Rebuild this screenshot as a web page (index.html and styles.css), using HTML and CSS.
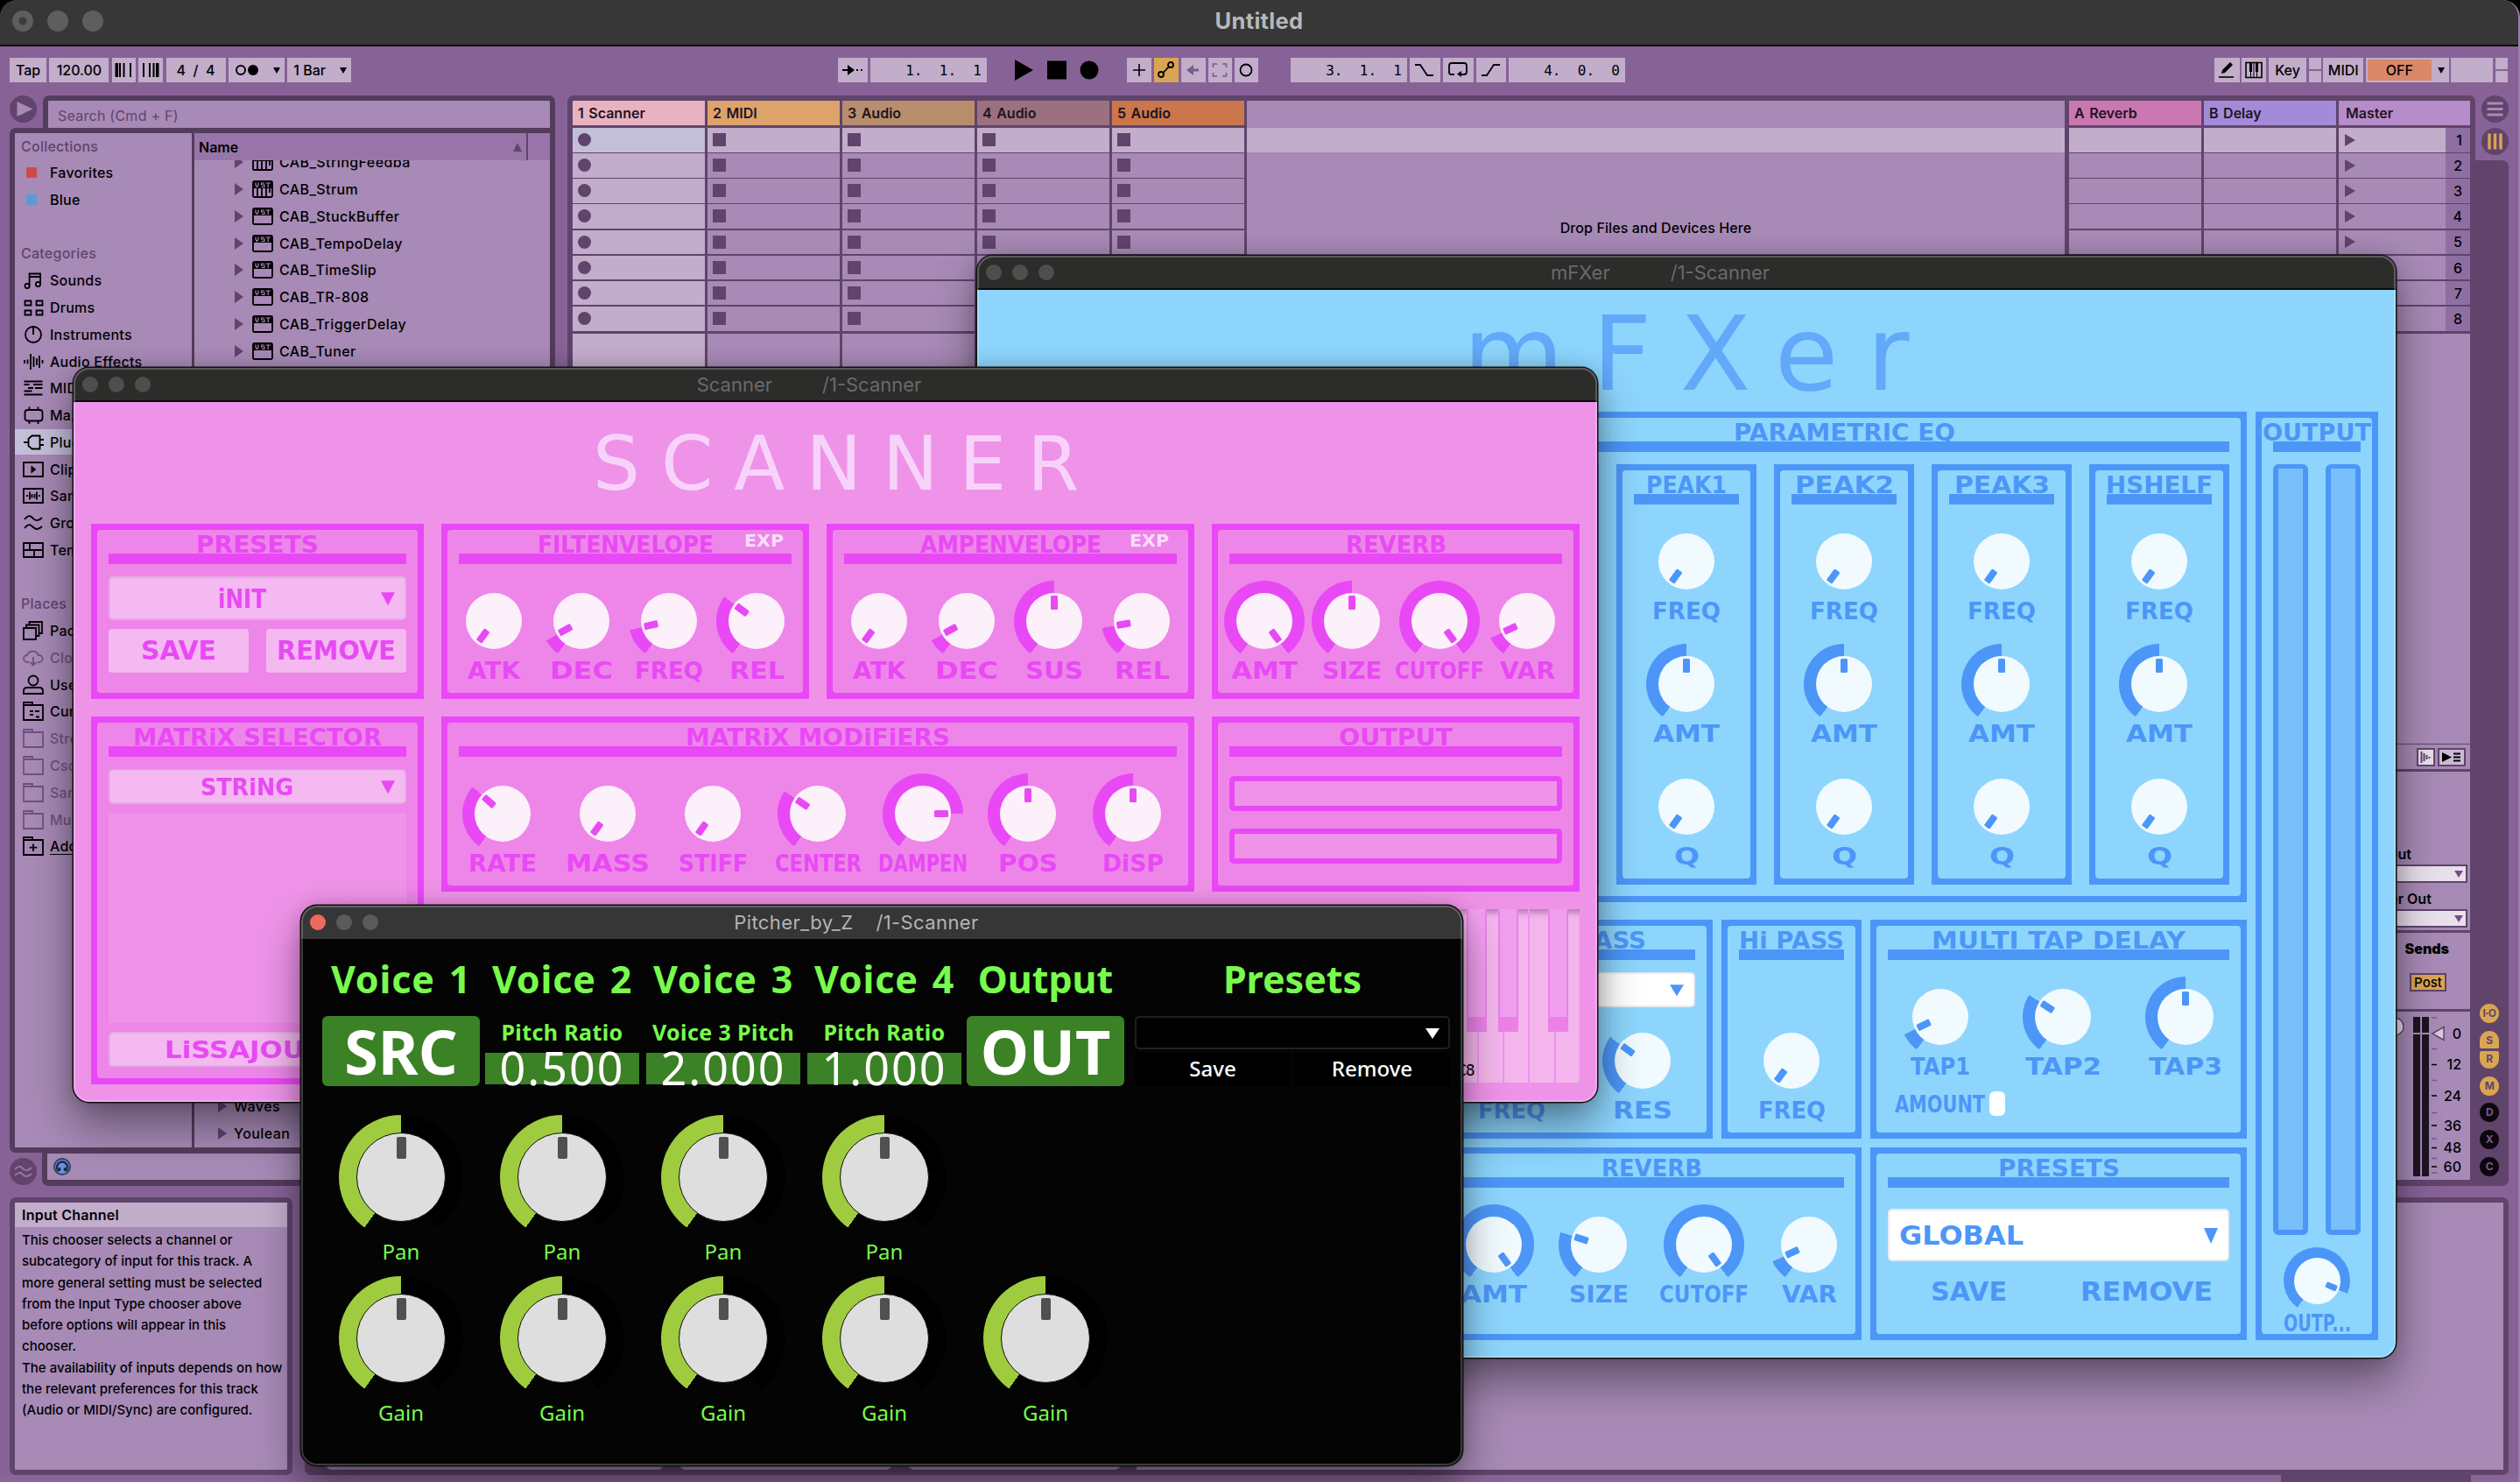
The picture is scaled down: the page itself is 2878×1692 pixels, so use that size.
FILE: index.html
```html
<!DOCTYPE html>
<html lang="en">
<head>
<meta charset="utf-8">
<title>Untitled</title>
<link rel="stylesheet" href="styles.css">
</head>
<body>
<svg class="defs" aria-hidden="true">
  <symbol id="i-sounds" viewBox="0 0 24 24"><circle cx="5" cy="18.5" r="2.6"/><circle cx="17.500" cy="16.500" r="2.600"/><path d="M7.600 18.500V4.500H20.100V16.500M7.600 8H20"/></symbol>
  <symbol id="i-drums" viewBox="0 0 24 24"><path d="M2.500 4.500h7v5h-7zM15.500 4.500h7v5h-7zM2.500 15.500h7v5h-7zM15.500 15.500h7v5h-7z"/></symbol>
  <symbol id="i-inst" viewBox="0 0 24 24"><circle cx="12" cy="12" r="9"/><path d="M12 3V12"/></symbol>
  <symbol id="i-audio" viewBox="0 0 24 24"><path d="M2 10v4M5.500 9.500v5M9 3v18M12.500 6v12M16 8v8M19 5v14M22.500 10v4"/></symbol>
  <symbol id="i-midi" viewBox="0 0 24 24"><path d="M1.500 4.500h21M1.500 8h6M12 8h10.500M6 12h6M14 12h8.500M1.500 15.500h9M1.500 19.500h21"/></symbol>
  <symbol id="i-max" viewBox="0 0 24 24"><rect x="2.500" y="6" width="20" height="12.500" rx="3"/><path d="M7.500 2.500v3.500M17.500 2.500v3.500M7.500 18.500V22M17.500 18.500V22"/></symbol>
  <symbol id="i-plug" viewBox="0 0 24 24"><path d="M1 12h5.500M19.500 4.500v15h-9l-4-3.500V8l4-3.500zM19.500 9H24M19.500 15H24"/></symbol>
  <symbol id="i-clip" viewBox="0 0 24 24"><path d="M1 4h22v16H1z"/><path class="f" d="M9.500 7.500v9l6-4.500z"/></symbol>
  <symbol id="i-samp" viewBox="0 0 24 24"><path d="M1 4h22v16H1zM5 11v2M8 7.500v9M10.500 10v4.500M13.500 10v4.500M16 7.500v9M19 11v2"/></symbol>
  <symbol id="i-groove" viewBox="0 0 24 24"><path d="M2 8c5-6 7-4 10-1s6 3 10-1M2 18c5-6 7-4 10-1s6 3 10-1"/></symbol>
  <symbol id="i-temp" viewBox="0 0 24 24"><path d="M1 4h22v16H1zM1 12h22M8 4v8M13 12v8"/></symbol>
  <symbol id="i-packs" viewBox="0 0 24 24"><path d="M1 9h14v13H1zM4 9V5.500h14.500V18H15M7.500 5V2H22v13h-3.500"/></symbol>
  <symbol id="i-cloud" viewBox="0 0 24 24"><path d="M7 17H5a4 4 0 0 1 0-8 7 7 0 0 1 13 0 4 4 0 0 1 1 8h-2M12 11v9M8.500 17l3.500 3.500 3.500-3.500"/></symbol>
  <symbol id="i-user" viewBox="0 0 24 24"><circle cx="12" cy="7" r="5.500"/><path d="M1 22v-3q0-4 4-4h14q4 0 4 4v3z"/></symbol>
  <symbol id="i-folder" viewBox="0 0 24 24"><path d="M1 22V2h10v3h12v17zM1 5h10"/></symbol>
  <symbol id="i-proj" viewBox="0 0 24 24"><path d="M1 22V2h10v3h12v17zM1 5h10M8 12h4M14 12h5M8 16h4M15 18.500h4"/></symbol>
  <symbol id="i-add" viewBox="0 0 24 24"><path d="M1 22V2h10v3h12v17zM1 5h10M12 9.500v8.500M7.800 13.700h8.500"/></symbol>
  <symbol id="i-vst" viewBox="0 0 24 24"><rect x="1" y="3" width="22" height="18" rx="1.500"/><path class="f" d="M1 3h22v8H1z"/><path class="inv" d="M4 4.500v3l1.500 2 1.500-2v-3M14 5h-3.500v2H14v2.500h-3.500M15.500 5H21M18.200 5v5"/></symbol>
  <symbol id="i-vsti" viewBox="0 0 24 24"><rect x="1" y="3" width="22" height="18" rx="1.500"/><path class="f" d="M1 3h22v8H1z"/><path d="M6 11v10M11 11v10M16 11v10M20 11v5"/><path class="inv" d="M4 4.500v3l1.500 2 1.500-2v-3M14 5h-3.500v2H14v2.500h-3.500M15.500 5H21M18.200 5v5"/></symbol>
</svg>

<div class="desktop">
<main class="live">
  <header class="bar"><span class="lights"><i class="dot"></i><i></i><i></i></span><h1>Untitled</h1></header>

  <nav class="tools">
    <div class="grp g1">
      <b style="width:42px">Tap</b><b style="width:68px">120.00</b>
      <b style="width:27px"><svg width="20" height="18"><path d="M1.500 1v16M6 1v16M10.500 1v16M18 1v16" stroke="#000" stroke-width="2"/><path d="M3 1v16" stroke="#000" stroke-width="2"/></svg></b>
      <b style="width:28px"><svg width="20" height="18"><path d="M2 1v16M9 1v16M13.500 1v16M17 1v16M18.500 1v16" stroke="#000" stroke-width="2"/></svg></b>
      <b style="width:68px" class="sp">4&nbsp; /&nbsp; 4</b>
      <b style="width:64px" class="l"><svg width="30" height="16"><circle cx="7" cy="8" r="5" fill="none" stroke="#000" stroke-width="2"/><circle cx="21" cy="8" r="6"/></svg><i class="dn"></i></b>
      <b style="width:73px" class="l">1 Bar<i class="dn"></i></b>
    </div>
    <div class="grp g2">
      <b style="width:34px"><svg width="26" height="14"><path d="M1 7h7" stroke="#000" stroke-width="2"/><path d="M7 1v12l8-6z"/><path d="M17 7h2M22 7h2" stroke="#000" stroke-width="2"/></svg></b>
      <b style="width:133px" class="mono">1.&nbsp; 1.&nbsp; 1</b>
    </div>
    <svg class="transport" width="98" height="28"><path d="M1 2v24l21-12z"/><path d="M38 3.500h22v21H38z"/><circle cx="86" cy="14" r="10.500"/></svg>
    <div class="grp g3">
      <b style="width:28px"><svg width="16" height="16"><path d="M8 1v14M1 8h14" stroke="#000" stroke-width="1.600"/></svg></b>
      <b style="width:28px" class="on"><svg width="22" height="22" fill="none" stroke="#000" stroke-width="1.800"><circle cx="5" cy="16" r="3"/><circle cx="16" cy="5" r="3"/><path d="M7.500 14l6.500-7"/></svg></b>
      <b style="width:28px"><svg width="16" height="14"><path d="M5 7h9" stroke="#7c5a8c" stroke-width="3"/><path d="M0 7l8-6v12z" fill="#7c5a8c"/></svg></b>
      <b style="width:27px"><svg width="18" height="18" fill="none" stroke="#7c5a8c" stroke-width="1.600"><path d="M1.500 6V2H6M12 2h4.500v4M16.500 12v4H12M6 16H1.500v-4"/></svg></b>
      <b style="width:27px"><svg width="18" height="18"><circle cx="9" cy="9" r="6.500" fill="none" stroke="#000" stroke-width="1.800"/></svg></b>
    </div>
    <div class="grp g4">
      <b style="width:133px" class="mono">3.&nbsp; 1.&nbsp; 1</b>
      <b style="width:35px"><svg class="s" width="24" height="16"><path d="M1 2h6l8 12h7"/></svg></b>
      <b style="width:35px"><svg class="s" width="24" height="20"><path d="M8 15H4q-2 0-2-3V5q0-3 3-3h14q3 0 3 3v7q0 3-3 3h-4"/><path class="f" d="M16 11v7l-5-3.500z"/></svg></b>
      <b style="width:34px"><svg class="s" width="24" height="16"><path d="M1 14h6l8-12h7"/></svg></b>
      <b style="width:133px" class="mono">4.&nbsp; 0.&nbsp; 0</b>
    </div>
    <div class="grp g5">
      <b style="width:29px"><svg width="20" height="20"><path d="M4 14l1-4 9-9 3 3-9 9z"/><path d="M1 18h17" stroke="#000" stroke-width="1.600"/></svg></b>
      <b style="width:28px"><svg width="20" height="20"><path d="M1 1.500h18v17H1z" fill="none" stroke="#000" stroke-width="1.600"/><path d="M5 1h3v11H5zM12 1h3v11h-3z"/><path d="M6.500 12v7M13.500 12v7M10 1v17" stroke="#000"/></svg></b>
      <b style="width:43px">Key</b><b style="width:14px" class="split"></b>
      <b style="width:46px">MIDI</b>
      <b style="width:95px" class="cpu"><em>OFF</em><i class="dn"></i></b>
      <b style="width:48px"></b><b style="width:14px" class="split"></b>
    </div>
  </nav>

  <div class="work">
    <section class="browser">
      <div class="srow"><span class="round"><svg width="31" height="31"><path d="M8.500 7v17l18-8.500z" fill="#a78ab6"/></svg></span><div class="search">Search (Cmd + F)</div></div>
      <div class="panes">
        <ul class="side">
          <li class="h">Collections</li>
          <li><i class="tag" style="background:#d1484b"></i>Favorites</li>
          <li><i class="tag" style="background:#5b9ad5"></i>Blue</li>
          <li></li>
          <li class="h">Categories</li>
          <li><svg><use href="#i-sounds"/></svg>Sounds</li>
          <li><svg><use href="#i-drums"/></svg>Drums</li>
          <li><svg><use href="#i-inst"/></svg>Instruments</li>
          <li><svg><use href="#i-audio"/></svg>Audio Effects</li>
          <li><svg><use href="#i-midi"/></svg>MIDI Effects</li>
          <li><svg><use href="#i-max"/></svg>Max for Live</li>
          <li class="sel"><svg><use href="#i-plug"/></svg>Plug-Ins</li>
          <li><svg><use href="#i-clip"/></svg>Clips</li>
          <li><svg><use href="#i-samp"/></svg>Samples</li>
          <li><svg><use href="#i-groove"/></svg>Grooves</li>
          <li><svg><use href="#i-temp"/></svg>Templates</li>
          <li></li>
          <li class="h">Places</li>
          <li><svg><use href="#i-packs"/></svg>Packs</li>
          <li class="off"><svg><use href="#i-cloud"/></svg>Cloud</li>
          <li><svg><use href="#i-user"/></svg>User Library</li>
          <li><svg><use href="#i-proj"/></svg>Current Project</li>
          <li class="off"><svg><use href="#i-folder"/></svg>Strech</li>
          <li class="off"><svg><use href="#i-folder"/></svg>Csound</li>
          <li class="off"><svg><use href="#i-folder"/></svg>Samples</li>
          <li class="off"><svg><use href="#i-folder"/></svg>Music</li>
          <li class="u"><svg><use href="#i-add"/></svg>Add Folder</li>
        </ul>
        <div class="files">
          <div class="fh"><span>Name</span><i></i></div>
          <ul class="list">
            <li><svg><use href="#i-vsti"/></svg>CAB_StringFeedba</li>
            <li><svg><use href="#i-vsti"/></svg>CAB_Strum</li>
            <li><svg><use href="#i-vst"/></svg>CAB_StuckBuffer</li>
            <li><svg><use href="#i-vst"/></svg>CAB_TempoDelay</li>
            <li><svg><use href="#i-vst"/></svg>CAB_TimeSlip</li>
            <li><svg><use href="#i-vst"/></svg>CAB_TR-808</li>
            <li><svg><use href="#i-vst"/></svg>CAB_TriggerDelay</li>
            <li><svg><use href="#i-vst"/></svg>CAB_Tuner</li>
            <li class="dir first">Waves</li>
            <li class="dir">Youlean</li>
          </ul>
        </div>
      </div>
      <div class="foot"><span class="round"><svg width="31" height="31" fill="none" stroke="#9775a9" stroke-width="2"><path d="M6 13c4-4 6-4 9-1s6 3 10-1M6 20c4-4 6-4 9-1s6 3 10-1"/></svg></span>
        <div class="prev"><svg width="22" height="22"><circle cx="11" cy="11" r="10" fill="#33405f"/><circle cx="11" cy="11" r="8" fill="#6b8fe0"/><path d="M7 16a6 6 0 1 1 8 0M8 12v4M14 12v4" fill="none" stroke="#1f2b4f" stroke-width="2.400"/></svg></div></div>
    </section>

    <section class="session">
      <div class="col first"><h3 style="background:#e8b2c0">1 Scanner</h3><p></p><p></p><p></p><p></p><p></p><p></p><p></p><p></p><div></div></div>
      <div class="col"><h3 style="background:#dda36a">2 MIDI</h3><p></p><p></p><p></p><p></p><p></p><p></p><p></p><p></p><div></div></div>
      <div class="col"><h3 style="background:#b98e6c">3 Audio</h3><p></p><p></p><p></p><p></p><p></p><p></p><p></p><p></p><div></div></div>
      <div class="col"><h3 style="background:#9c717f">4 Audio</h3><p></p><p></p><p></p><p></p><p></p><p></p><p></p><p></p><div></div></div>
      <div class="col"><h3 style="background:#cb774b">5 Audio</h3><p></p><p></p><p></p><p></p><p></p><p></p><p></p><p></p><div></div></div>
      <div class="drop"><span>Drop Files and Devices Here</span></div>
      <div class="col ret"><h3 style="background:#cb77b2">A Reverb</h3><p></p><p></p><p></p><p></p><p></p><p></p><p></p><p></p><div></div></div>
      <div class="col ret"><h3 style="background:#a38bd9">B Delay</h3><p></p><p></p><p></p><p></p><p></p><p></p><p></p><p></p><div></div></div>
      <div class="col master"><h3 style="background:#b78cca">Master</h3><p>1</p><p>2</p><p>3</p><p>4</p><p>5</p><p>6</p><p>7</p><p>8</p>
        <div class="rest"></div>
        <div class="ctl"><svg width="21" height="21"><path d="M1 1h19v19H1z" fill="#e8e0ec" stroke="#60446c" stroke-width="2"/><path d="M5.500 4v13M8.500 6v9M11.500 8v5M14.500 10v2" stroke="#60446c" stroke-width="2"/></svg><svg width="32" height="21"><path d="M1 1h30v19H1z" fill="#cbbad3" stroke="#60446c" stroke-width="2"/><path d="M5 5v11l11-5.500z"/><path d="M18 6.500h8M18 10.500h8M18 14.500h8" stroke="#000" stroke-width="1.800"/></svg></div>
        <div class="io"><label class="cue">Cue Out</label><span></span><label>Master Out</label><span></span></div>
        <div class="sends"><b>Sends</b><em>Post</em></div>
        <svg class="meter" width="150" height="192">
          <circle cx="64" cy="17" r="10" fill="#e8e0ec" stroke="#60446c" stroke-width="1.500"/>
          <path d="M85 6h8v182h-8zM95 6h8v182h-8z" fill="#1d1422"/><path d="M85 25h19" stroke="#a78ab6" stroke-width="2"/>
          <path d="M107 25l13-7.500v15z" fill="#d9cbe0" stroke="#60446c" stroke-width="1.500"/>
          <path d="M106 7h6M106 42.500h6M106 78.500h6M106 115.500h6M106 145h6M106 167.500h6M106 184h6" stroke="#7c5a8c" stroke-width="1.500"/>
          <path d="M106 60.500h6M106 96h6M106 130h6M106 155.500h6M106 177h6" stroke="#000" stroke-width="1.700"/>
          <g text-anchor="end"><text x="140" y="31">0</text><text x="140" y="66">12</text><text x="140" y="102">24</text><text x="140" y="136">36</text><text x="140" y="161">48</text><text x="140" y="183">60</text></g>
        </svg>
      </div>
    </section>

    <aside class="rail">
      <span class="round"><svg width="31" height="31"><path d="M6.500 9h18M6.500 15.500h18M6.500 22h18" stroke="#a78ab6" stroke-width="3"/></svg></span>
      <span class="round"><svg width="31" height="31"><path d="M9 6.500v18M15.500 6.500v18M22 6.500v18" stroke="#daa552" stroke-width="3.400"/></svg></span>
      <div class="shaft"><i>I·O</i><i class="top">S</i><i class="bot">R</i><i class="m">M</i><i class="k">D</i><i class="k">X</i><i class="k">C</i></div>
    </aside>
  </div>

  <div class="lower">
    <section class="info"><h2>Input Channel</h2><p>This chooser selects a channel or<br>subcategory of input for this track. A<br>more general setting must be selected<br>from the Input Type chooser above<br>before options will appear in this<br>chooser.<br>The availability of inputs depends on how<br>the relevant preferences for this track<br>(Audio or MIDI/Sync) are configured.</p></section>
    <section class="detail"><i style="width:386px;margin-left:18px"></i><i style="width:243px"></i><i style="width:243px"></i><i class="wide"></i></section>
  </div>
  <div class="status"></div>
</main>

<section class="win mfx">
  <header class="bar"><span class="lights"><i></i><i></i><i></i></span><span class="name"><span>mFXer</span><span>/1-Scanner</span></span></header>
  <h2 class="logo">mFXer</h2>
  <div class="fx">
    <div class="panel eq"><div class="in">
      <svg class="t" width="253" height="20"><text y="20" textLength="253" lengthAdjust="spacingAndGlyphs">PARAMETRIC EQ</text></svg><hr>
      <div class="bands">
        <div class="panel"><div class="in"><svg class="t" width="122" height="20"><text y="20" textLength="122" lengthAdjust="spacingAndGlyphs">LSHELF</text></svg><hr></div></div>
        <div class="panel"><div class="in"><svg class="t" width="92" height="20"><text y="20" textLength="92" lengthAdjust="spacingAndGlyphs">PEAK1</text></svg><hr>
          <div class="stack"><i class="knob" style="--v:0"></i><svg class="t" width="78" height="20"><text y="20" textLength="78" lengthAdjust="spacingAndGlyphs">FREQ</text></svg><i class="knob" style="--v:144"></i><svg class="t" width="76" height="20"><text y="20" textLength="76" lengthAdjust="spacingAndGlyphs">AMT</text></svg><i class="knob" style="--v:0"></i><svg class="t" width="29" height="20"><text y="20" textLength="29" lengthAdjust="spacingAndGlyphs">Q</text></svg></div></div></div>
        <div class="panel"><div class="in"><svg class="t" width="113" height="20"><text y="20" textLength="113" lengthAdjust="spacingAndGlyphs">PEAK2</text></svg><hr>
          <div class="stack"><i class="knob" style="--v:0"></i><svg class="t" width="78" height="20"><text y="20" textLength="78" lengthAdjust="spacingAndGlyphs">FREQ</text></svg><i class="knob" style="--v:144"></i><svg class="t" width="76" height="20"><text y="20" textLength="76" lengthAdjust="spacingAndGlyphs">AMT</text></svg><i class="knob" style="--v:0"></i><svg class="t" width="29" height="20"><text y="20" textLength="29" lengthAdjust="spacingAndGlyphs">Q</text></svg></div></div></div>
        <div class="panel"><div class="in"><svg class="t" width="109" height="20"><text y="20" textLength="109" lengthAdjust="spacingAndGlyphs">PEAK3</text></svg><hr>
          <div class="stack"><i class="knob" style="--v:0"></i><svg class="t" width="78" height="20"><text y="20" textLength="78" lengthAdjust="spacingAndGlyphs">FREQ</text></svg><i class="knob" style="--v:144"></i><svg class="t" width="76" height="20"><text y="20" textLength="76" lengthAdjust="spacingAndGlyphs">AMT</text></svg><i class="knob" style="--v:0"></i><svg class="t" width="29" height="20"><text y="20" textLength="29" lengthAdjust="spacingAndGlyphs">Q</text></svg></div></div></div>
        <div class="panel"><div class="in"><svg class="t" width="122" height="20"><text y="20" textLength="122" lengthAdjust="spacingAndGlyphs">HSHELF</text></svg><hr>
          <div class="stack"><i class="knob" style="--v:0"></i><svg class="t" width="78" height="20"><text y="20" textLength="78" lengthAdjust="spacingAndGlyphs">FREQ</text></svg><i class="knob" style="--v:144"></i><svg class="t" width="76" height="20"><text y="20" textLength="76" lengthAdjust="spacingAndGlyphs">AMT</text></svg><i class="knob" style="--v:0"></i><svg class="t" width="29" height="20"><text y="20" textLength="29" lengthAdjust="spacingAndGlyphs">Q</text></svg></div></div></div>
      </div></div></div>

    <div class="panel out"><div class="in">
      <svg class="t" width="124" height="20"><text y="20" textLength="124" lengthAdjust="spacingAndGlyphs">OUTPUT</text></svg><hr>
      <div class="vu"><i></i><i></i></div>
      <i class="knob sm" style="--v:257"></i>
      <svg class="t" width="77" height="20"><text y="20" textLength="77" lengthAdjust="spacingAndGlyphs">OUTP...</text></svg>
    </div></div>

    <div class="panel low"><div class="in">
      <svg class="t" width="158" height="20"><text y="20" textLength="158" lengthAdjust="spacingAndGlyphs">LOW PASS</text></svg><hr>
      <div class="select"><i class="tri"></i></div>
      <div class="knobs two">
        <div><i class="knob" style="--v:90"></i><svg class="t" width="77" height="20"><text y="20" textLength="77" lengthAdjust="spacingAndGlyphs">FREQ</text></svg></div>
        <div><i class="knob" style="--v:90"></i><svg class="t" width="68" height="20"><text y="20" textLength="68" lengthAdjust="spacingAndGlyphs">RES</text></svg></div>
      </div></div></div>

    <div class="panel hi"><div class="in">
      <svg class="t" width="120" height="20"><text y="20" textLength="120" lengthAdjust="spacingAndGlyphs">Hi PASS</text></svg><hr>
      <div class="knobs deep"><div><i class="knob" style="--v:0"></i><svg class="t" width="77" height="20"><text y="20" textLength="77" lengthAdjust="spacingAndGlyphs">FREQ</text></svg></div></div></div></div>

    <div class="panel tap"><div class="in">
      <svg class="t" width="290" height="20"><text y="20" textLength="290" lengthAdjust="spacingAndGlyphs">MULTI TAP DELAY</text></svg><hr>
      <div class="knobs">
        <div><i class="knob" style="--v:28"></i><svg class="t" width="68" height="20"><text y="20" textLength="68" lengthAdjust="spacingAndGlyphs">TAP1</text></svg></div>
        <div><i class="knob" style="--v:87"></i><svg class="t" width="87" height="20"><text y="20" textLength="87" lengthAdjust="spacingAndGlyphs">TAP2</text></svg></div>
        <div><i class="knob" style="--v:144"></i><svg class="t" width="84" height="20"><text y="20" textLength="84" lengthAdjust="spacingAndGlyphs">TAP3</text></svg></div>
      </div>
      <div class="amount"><svg class="t" width="103" height="20"><text y="20" textLength="103" lengthAdjust="spacingAndGlyphs">AMOUNT</text></svg><i></i></div>
    </div></div>

    <div class="panel rev"><div class="in">
      <svg class="t" width="115" height="20"><text y="20" textLength="115" lengthAdjust="spacingAndGlyphs">REVERB</text></svg><hr>
      <div class="knobs">
        <div><i class="knob" style="--v:288"></i><svg class="t" width="76" height="20"><text y="20" textLength="76" lengthAdjust="spacingAndGlyphs">AMT</text></svg></div>
        <div><i class="knob" style="--v:72"></i><svg class="t" width="68" height="20"><text y="20" textLength="68" lengthAdjust="spacingAndGlyphs">SIZE</text></svg></div>
        <div><i class="knob" style="--v:288"></i><svg class="t" width="102" height="20"><text y="20" textLength="102" lengthAdjust="spacingAndGlyphs">CUTOFF</text></svg></div>
        <div><i class="knob" style="--v:29"></i><svg class="t" width="63" height="20"><text y="20" textLength="63" lengthAdjust="spacingAndGlyphs">VAR</text></svg></div>
      </div></div></div>

    <div class="panel pre"><div class="in">
      <svg class="t" width="139" height="20"><text y="20" textLength="139" lengthAdjust="spacingAndGlyphs">PRESETS</text></svg><hr>
      <div class="select"><svg class="t b" width="142" height="22"><text y="22" textLength="142" lengthAdjust="spacingAndGlyphs">GLOBAL</text></svg><i class="tri"></i></div>
      <div class="acts"><svg class="t b" width="87" height="22"><text y="22" textLength="87" lengthAdjust="spacingAndGlyphs">SAVE</text></svg><svg class="t b" width="151" height="22"><text y="22" textLength="151" lengthAdjust="spacingAndGlyphs">REMOVE</text></svg></div>
    </div></div>
  </div>
</section>

<section class="win scan">
  <header class="bar"><span class="lights"><i></i><i></i><i></i></span><span class="name"><span>Scanner</span><span>/1-Scanner</span></span></header>
  <h2 class="logo">SCANNER</h2>
  <div class="grid">
    <div class="panel"><div class="in">
      <svg class="t" width="140" height="20"><text y="20" textLength="140" lengthAdjust="spacingAndGlyphs">PRESETS</text></svg><hr>
      <div class="select tall"><svg class="t b" width="55" height="22"><text y="22" textLength="55" lengthAdjust="spacingAndGlyphs">iNIT</text></svg><i class="tri"></i></div>
      <div class="btns"><span><svg class="t b" width="86" height="22"><text y="22" textLength="86" lengthAdjust="spacingAndGlyphs">SAVE</text></svg></span><span><svg class="t b" width="136" height="22"><text y="22" textLength="136" lengthAdjust="spacingAndGlyphs">REMOVE</text></svg></span></div>
    </div></div>
    <div class="panel"><div class="in">
      <svg class="t exp" width="45" height="14"><text y="14" textLength="45" lengthAdjust="spacingAndGlyphs">EXP</text></svg>
      <svg class="t" width="201" height="20"><text y="20" textLength="201" lengthAdjust="spacingAndGlyphs">FILTENVELOPE</text></svg><hr>
      <div class="knobs">
        <div><i class="knob" style="--v:0"></i><svg class="t" width="60" height="20"><text y="20" textLength="60" lengthAdjust="spacingAndGlyphs">ATK</text></svg></div>
        <div><i class="knob" style="--v:25"></i><svg class="t" width="72" height="20"><text y="20" textLength="72" lengthAdjust="spacingAndGlyphs">DEC</text></svg></div>
        <div><i class="knob" style="--v:41"></i><svg class="t" width="78" height="20"><text y="20" textLength="78" lengthAdjust="spacingAndGlyphs">FREQ</text></svg></div>
        <div><i class="knob" style="--v:91"></i><svg class="t" width="63" height="20"><text y="20" textLength="63" lengthAdjust="spacingAndGlyphs">REL</text></svg></div>
      </div></div></div>
    <div class="panel"><div class="in">
      <svg class="t exp" width="45" height="14"><text y="14" textLength="45" lengthAdjust="spacingAndGlyphs">EXP</text></svg>
      <svg class="t" width="207" height="20"><text y="20" textLength="207" lengthAdjust="spacingAndGlyphs">AMPENVELOPE</text></svg><hr>
      <div class="knobs">
        <div><i class="knob" style="--v:0"></i><svg class="t" width="60" height="20"><text y="20" textLength="60" lengthAdjust="spacingAndGlyphs">ATK</text></svg></div>
        <div><i class="knob" style="--v:25"></i><svg class="t" width="72" height="20"><text y="20" textLength="72" lengthAdjust="spacingAndGlyphs">DEC</text></svg></div>
        <div><i class="knob" style="--v:144"></i><svg class="t" width="66" height="20"><text y="20" textLength="66" lengthAdjust="spacingAndGlyphs">SUS</text></svg></div>
        <div><i class="knob" style="--v:44"></i><svg class="t" width="63" height="20"><text y="20" textLength="63" lengthAdjust="spacingAndGlyphs">REL</text></svg></div>
      </div></div></div>
    <div class="panel"><div class="in">
      <svg class="t" width="115" height="20"><text y="20" textLength="115" lengthAdjust="spacingAndGlyphs">REVERB</text></svg><hr>
      <div class="knobs">
        <div><i class="knob" style="--v:288"></i><svg class="t" width="76" height="20"><text y="20" textLength="76" lengthAdjust="spacingAndGlyphs">AMT</text></svg></div>
        <div><i class="knob" style="--v:144"></i><svg class="t" width="68" height="20"><text y="20" textLength="68" lengthAdjust="spacingAndGlyphs">SIZE</text></svg></div>
        <div><i class="knob" style="--v:288"></i><svg class="t" width="102" height="20"><text y="20" textLength="102" lengthAdjust="spacingAndGlyphs">CUTOFF</text></svg></div>
        <div><i class="knob" style="--v:29"></i><svg class="t" width="63" height="20"><text y="20" textLength="63" lengthAdjust="spacingAndGlyphs">VAR</text></svg></div>
      </div></div></div>
    <div class="panel sel2"><div class="in">
      <svg class="t" width="284" height="20"><text y="20" textLength="284" lengthAdjust="spacingAndGlyphs">MATRiX SELECTOR</text></svg><hr>
      <div class="select"><svg class="t" width="106" height="20"><text y="20" textLength="106" lengthAdjust="spacingAndGlyphs">STRiNG</text></svg><i class="tri"></i></div>
      <div class="view"></div>
      <div class="select last"><svg class="t" width="182" height="20"><text y="20" textLength="182" lengthAdjust="spacingAndGlyphs">LiSSAJOUS</text></svg></div>
    </div></div>
    <div class="panel mods"><div class="in">
      <svg class="t" width="302" height="20"><text y="20" textLength="302" lengthAdjust="spacingAndGlyphs">MATRiX MODiFiERS</text></svg><hr>
      <div class="knobs">
        <div><i class="knob" style="--v:96"></i><svg class="t" width="78" height="20"><text y="20" textLength="78" lengthAdjust="spacingAndGlyphs">RATE</text></svg></div>
        <div><i class="knob" style="--v:0"></i><svg class="t" width="96" height="20"><text y="20" textLength="96" lengthAdjust="spacingAndGlyphs">MASS</text></svg></div>
        <div><i class="knob" style="--v:0"></i><svg class="t" width="79" height="20"><text y="20" textLength="79" lengthAdjust="spacingAndGlyphs">STIFF</text></svg></div>
        <div><i class="knob" style="--v:88"></i><svg class="t" width="99" height="20"><text y="20" textLength="99" lengthAdjust="spacingAndGlyphs">CENTER</text></svg></div>
        <div><i class="knob" style="--v:234"></i><svg class="t" width="102" height="20"><text y="20" textLength="102" lengthAdjust="spacingAndGlyphs">DAMPEN</text></svg></div>
        <div><i class="knob" style="--v:144"></i><svg class="t" width="68" height="20"><text y="20" textLength="68" lengthAdjust="spacingAndGlyphs">POS</text></svg></div>
        <div><i class="knob" style="--v:144"></i><svg class="t" width="70" height="20"><text y="20" textLength="70" lengthAdjust="spacingAndGlyphs">DiSP</text></svg></div>
      </div></div></div>
    <div class="panel"><div class="in">
      <svg class="t" width="130" height="20"><text y="20" textLength="130" lengthAdjust="spacingAndGlyphs">OUTPUT</text></svg><hr>
      <div class="hu"><i></i><i></i></div>
    </div></div>
    <div class="keys"><span>C8</span><i></i><i></i><i></i><i></i><b class="k1"></b><b class="k2"></b><b class="k3"></b></div>
  </div>
</section>

<section class="win pitch">
  <header class="bar"><span class="lights"><i class="red"></i><i></i><i></i></span><span class="name"><span>Pitcher_by_Z</span><span>/1-Scanner</span></span></header>
  <div class="pbody">
    <div class="voice"><h3>Voice 1</h3><div class="big">SRC</div><i class="dial"></i><label>Pan</label><i class="dial"></i><label>Gain</label></div>
    <div class="voice"><h3>Voice 2</h3><div class="ratio"><b>Pitch Ratio</b><span><em>0.500</em></span></div><i class="dial"></i><label>Pan</label><i class="dial"></i><label>Gain</label></div>
    <div class="voice"><h3>Voice 3</h3><div class="ratio"><b>Voice 3 Pitch</b><span><em>2.000</em></span></div><i class="dial"></i><label>Pan</label><i class="dial"></i><label>Gain</label></div>
    <div class="voice"><h3>Voice 4</h3><div class="ratio"><b>Pitch Ratio</b><span><em>1.000</em></span></div><i class="dial"></i><label>Pan</label><i class="dial"></i><label>Gain</label></div>
    <div class="voice outv"><h3>Output</h3><div class="big">OUT</div><i class="dial"></i><label>Gain</label></div>
    <div class="presets"><h3>Presets</h3><div class="combo"><i></i></div><div class="pair"><span>Save</span><span>Remove</span></div></div>
  </div>
</section>
</div>
</body>
</html>
```
FILE: styles.css
```css
* { box-sizing: border-box; margin: 0; padding: 0; }
body { width: 2878px; height: 1692px; overflow: hidden; background: #000; font-family: Inter, "Liberation Sans", sans-serif; font-size: 16px; color: #000; }
ul { list-style: none; }
i, em { font-style: normal; display: block; }
svg { display: block; flex: none; }
.defs { width: 0; height: 0; position: absolute; }
.desktop { position: relative; width: 2878px; height: 1692px; overflow: hidden; }

/* window chrome */
.bar { position: relative; display: flex; align-items: center; justify-content: center; }
.lights { position: absolute; left: 10px; top: 10px; display: flex; gap: 12px; }
.lights i { width: 18px; height: 18px; border-radius: 50%; background: #4e4e4d; }
.live { width: 2878px; height: 1692px; background: #876297; border-radius: 20px 20px 0 0; overflow: hidden; display: flex; flex-direction: column; border-right: 2px solid #9b7fa9; }
.live > .bar { height: 53px; flex: none; background: #373737; border-bottom: 2px solid #0a060b; padding: 0 0 5px 0; }
.live > .bar .lights { left: 14px; top: 12px; gap: 16px; }
.live > .bar .lights i { width: 24px; height: 24px; background: #5e5e5e; }
.live > .bar .dot { background: radial-gradient(circle, #3c3c3c 4px, #5e5e5e 5px) !important; }
.live h1 { font-size: 25.5px; font-weight: 700; color: #b8b8b8; letter-spacing: .3px; }

/* toolbar */
.tools { height: 56px; flex: none; display: flex; align-items: flex-start; padding: 13px 12px 0 11px; }
.grp { display: flex; gap: 3px; }
.g1 { gap: 3.4px; }
.grp b { height: 28px; background: #c2adcb; font-weight: 500; font-size: 16px; display: flex; align-items: center; justify-content: center; white-space: nowrap; overflow: hidden; }
.grp b.l { justify-content: space-between; padding: 0 5px 0 7px; }
.grp b.mono { font-family: "DejaVu Sans Mono", monospace; font-weight: 400; font-size: 16px; justify-content: flex-end; padding-right: 6px; }
.grp b.on { background: #daa552; }
.grp b.split { background: linear-gradient(#c2adcb 13px, #876297 13px 15px, #c2adcb 15px); }
.grp svg.s { fill: none; stroke: #000; stroke-width: 1.8; }
.grp svg.s .f { fill: #000; stroke: none; }
.grp .cpu { justify-content: space-between; padding: 0 5px 0 2px; }
.cpu em { width: 73px; height: 24px; line-height: 24px; text-align: center; background: #d98869; }
.dn { border: 4px solid transparent; border-top: 7px solid #000; border-bottom: 0; }
.g2 { margin-left: 555.6px; }
.transport { margin-left: 31px; }
.g3 { margin-left: 31px; }
.g4 { margin-left: 37px; }
.g5 { margin-left: auto; gap: 2.6px; }

/* browser */
.work { display: flex; height: 1245px; flex: none; }
.round { width: 31px; height: 31px; border-radius: 50%; background: #60446c; flex: none; }
.browser { width: 623px; margin-left: 11px; display: flex; flex-direction: column; }
.srow { display: flex; height: 40px; gap: 7px; flex: none; }
.search { flex: 1; border: 6px solid #533c5c; border-bottom: 0; border-radius: 7px 7px 0 0; background: #a78ab6; color: #60446c; line-height: 35px; padding-left: 11px; letter-spacing: .25px; }
.panes { position: relative; margin-top: -3px; height: 1170px; flex: none; background: #533c5c; border-radius: 7px 0 0 7px; padding: 6px; display: flex; gap: 3px; }
.side { width: 202px; background: #a78ab6; overflow: hidden; white-space: nowrap; letter-spacing: .25px; }
.side li { height: 30.78px; display: flex; align-items: center; gap: 7px; padding-left: 9px; font-weight: 500; font-size: 16px; }
.side li:first-child { height: 29.8px; }
.side .h { color: #60446c; padding-left: 7px; }
.side svg, .list svg { width: 24px; height: 24px; fill: none; stroke: #000; stroke-width: 1.8; }
.f { fill: #000; stroke: none; }
.inv { stroke: #a78ab6; stroke-width: 1.2; }
.side .tag { width: 12px; height: 12px; margin: 0 8px 0 4px; border-radius: 1px; }
.side .sel { background: linear-gradient(#c4bfd9, #c4bfd9) 0 1px / 100% 29px no-repeat; }
.side .off { color: #6f517c; }
.side .off svg { stroke: #6f517c; }
.side .u { text-decoration: underline; text-underline-offset: 3px; }
.files { flex: 1; background: #a78ab6; display: flex; flex-direction: column; min-height: 0; }
.fh { height: 31px; flex: none; background: #9775a9; display: flex; align-items: center; justify-content: space-between; padding: 0 32px 0 5px; font-weight: 600; font-size: 16px; background-image: linear-gradient(90deg, transparent 379px, #60446c 379px 381px, transparent 381px); }
.fh i { border: 5.5px solid transparent; border-bottom: 10px solid #60446c; border-top: 0; }
.list { flex: 1; min-height: 0; overflow: hidden; display: flex; flex-direction: column; font-weight: 500; letter-spacing: .42px; padding-bottom: 1px; }
.list li { height: 30.78px; flex: none; display: flex; align-items: center; gap: 7px; padding-left: 46px; }
.list li:first-child { margin-top: -13px; }
.list li::before { content: ""; border: 7px solid transparent; border-left: 10px solid #60446c; border-right: 0; margin-right: 3px; }
.list .dir { padding-left: 27px; gap: 5px; }
.list .first { margin-top: auto; }
.foot { display: flex; height: 41px; margin-top: -3px; gap: 6px; align-items: flex-end; }
.foot .round { position: relative; top: -1px; }
.prev { flex: 1; height: 41px; border: solid #533c5c; border-width: 4px 6px 7px 6px; border-radius: 0 0 7px 7px; background: #a78ab6; padding: 4px 6px; }

/* session view */
.session { width: 2179px; margin-left: 14px; background: #60446c; border-radius: 7px 7px 0 0; padding: 6px 6px 7px; display: flex; gap: 3px; }
.col { width: 151px; flex: none; display: flex; flex-direction: column; gap: 1.5px; }
.col h3 { height: 28px; line-height: 28px; margin-bottom: 1.5px; padding-left: 6px; font-size: 16px; font-weight: 600; word-spacing: 1.5px; color: #20141f; flex: none; }
.col p { height: 27.65px; flex: none; background: #a78ab6; padding: 6px; }
.col p::before { content: ""; display: block; width: 15px; height: 15px; background: #60446c; }
.col p:nth-of-type(1) { background: #c2adcb; }
.col > div { background: #a78ab6; }
.col > div:last-child { flex: 1; margin-top: 1.5px; }
.first p { background: #c2adcb; }
.first p:nth-of-type(1) { background: #c4bfd9; }
.first p::before { border-radius: 50%; }
.first > div { background: #c2adcb !important; }
.drop { flex: 1; margin-right: 2px; background: linear-gradient(#a78ab6 31px, #c2adcb 31px 58.5px, #a78ab6 58.5px); text-align: center; padding-top: 135px; letter-spacing: .1px; font-weight: 500; }
.ret p::before { display: none; }
.master { width: 150px; }
.master h3 { padding-left: 8px; }
.master p { display: flex; justify-content: space-between; padding: 0 9px 0 7px; align-items: center; font-weight: 500; background: linear-gradient(90deg, transparent 122px, #8f6ea1 122px) #a78ab6; }
.master p:nth-of-type(1) { background: linear-gradient(90deg, transparent 122px, #8f6ea1 122px) #c2adcb; }
.master p::before { width: 0; height: 0; background: none; border: 7px solid transparent; border-left: 12px solid #60446c; border-right: 0; }
.master .rest { height: 468px; flex: none; margin-top: 1.5px; }
.ctl { height: 28px; flex: none; display: flex; gap: 3px; justify-content: flex-end; align-items: center; padding-right: 5px; }
.io { height: 181px; margin-top: 1.5px; flex: none; padding: 84px 3px 0 20px; display: flex; flex-direction: column; font-weight: 600; }
.io label { height: 22px; flex: none; line-height: 21px; padding-right: 55px; white-space: nowrap; text-align: right; }
.io .cue { padding-right: 79px; }
.io .cue + span { margin-bottom: 8px; }
.io span { height: 21px; flex: none; background: #e8e0ec; border: 2px solid #60446c; position: relative; }
.io span::after { content: ""; position: absolute; right: 3px; top: 5px; border: 5px solid transparent; border-top: 8px solid #7c4a8c; border-bottom: 0; }
.sends { height: 87px; margin-top: 1.5px; flex: none; display: flex; flex-direction: column; align-items: flex-end; padding: 8px 24px 0 0; font-weight: 600; }
.sends em { margin: 18px 3px 0 0; width: 42px; height: 21px; line-height: 17px; border: 2px solid #60446c; background: #daa552; text-align: center; font-weight: 500; font-size: 15px; }
.meter { margin-top: 1.5px; background: #a78ab6; font-size: 16px; font-weight: 500; }

.rail { width: 38px; display: flex; flex-direction: column; align-items: flex-end; gap: 6px; }
.shaft { width: 44px; flex: 1; background: #60446c; border-radius: 0 7px 7px 0; display: flex; flex-direction: column; align-items: center; justify-content: flex-end; padding-bottom: 11px; gap: 8.8px; }
.shaft i { width: 22px; height: 22px; border-radius: 50%; background: #daa552; color: #60446c; font: 700 12px/22px Inter, sans-serif; text-align: center; letter-spacing: -.5px; }
.shaft .top { height: 20px; line-height: 21px; border-radius: 11px 11px 2px 2px; margin-bottom: -6px; }
.shaft .bot { height: 20px; line-height: 18px; border-radius: 2px 2px 11px 11px; }
.shaft .k { background: #0c070e; color: #7c5a8c; }

/* info and device views */
.lower { display: flex; gap: 14px; margin: 13px 0 0 11px; height: 317px; flex: none; }
.info { width: 323px; background: #a78ab6; border: 6px solid #60446c; border-radius: 7px; }
.info h2 { height: 28px; line-height: 28px; padding-left: 8px; font-size: 16px; font-weight: 600; background: #c2adcb; letter-spacing: .25px; }
.info p { padding: 3px 0 0 8px; line-height: 24.3px; font-size: 15px; font-weight: 500; white-space: nowrap; }
.detail { width: 2517px; background: #60446c; border-radius: 7px; padding: 6px; display: flex; gap: 18px; }
.detail i { background: #a78ab6; border-radius: 7px; }
.detail .wide { flex: 1; border-radius: 0; }
.status { height: 8px; background: linear-gradient(90deg, #8a649a 2605px, #60446c 2605px 2822px, #8a649a 2822px); }

/* plug-in windows */
.win { position: absolute; border-radius: 18px; overflow: hidden; box-shadow: 0 0 0 1.5px #111, 0 26px 50px rgba(0,0,0,.42), 0 0 22px rgba(0,0,0,.18); display: flex; flex-direction: column; }
.win::after { content: ""; position: absolute; inset: 0; border-radius: 18px; box-shadow: inset 0 0 0 2px rgba(255,255,255,.22); pointer-events: none; }
.win > .bar { height: 39px; flex: none; background: #2c2c2b; border-bottom: 2px solid #0a0a0a; font-size: 22px; color: #6a6a6a; }
.name { display: flex; align-items: center; position: relative; }
.win hr { border: 0; height: 12px; background: var(--a); margin: 1px 13px 0; flex: none; align-self: stretch; }
.panel { background: var(--a); padding: 7px; display: flex; min-width: 0; }
.in { position: relative; flex: 1; min-width: 0; background: var(--p); border-radius: 4px; padding-top: 6px; display: flex; flex-direction: column; align-items: center; }
.t { overflow: visible; fill: var(--a); font: bold 27.4px "DejaVu Sans", sans-serif; }
.t.b { font-size: 30px; }
.knobs { align-self: stretch; margin: 19px 13px 0; display: flex; gap: 20px; }
.knobs > div { flex: 1; width: 0; display: flex; flex-direction: column; align-items: center; }
.knob { position: relative; width: 92px; height: 92px; flex: none; border-radius: 50%; background: conic-gradient(from 216deg, var(--a) calc(var(--v) * 1deg), transparent 0); }
.knob::before { content: ""; position: absolute; inset: 14px; border-radius: 50%; background: var(--k); }
.knob::after { content: ""; position: absolute; left: 42px; top: 17px; width: 8px; height: 16px; border-radius: 1.5px; background: var(--a); transform-origin: 50% 29px; transform: rotate(calc(216deg + var(--v) * 1deg)); }
.tri { width: 0; height: 0; border: 8px solid transparent; border-top: 15px solid var(--a); border-bottom: 0; position: absolute; right: 11px; top: 50%; transform: translateY(-45%); }
.select { position: relative; align-self: stretch; flex: none; margin: 14px 13px 0; height: 40px; background: var(--s); border: 2px solid var(--sb); border-radius: 5px; display: flex; align-items: center; justify-content: center; }

.mfx { --a: #4c96f8; --p: #8dd5fd; --k: #f1fafe; --s: #fff; --sb: #e6ebf2; left: 1116px; top: 292px; width: 1620px; height: 1258px; background: #8dd5fd; }
.mfx .name { gap: 69px; left: -30px; }
.mfx .logo { height: 139px; flex: none; margin-left: 555px; font: 118px/147px "DejaVu Sans", sans-serif; letter-spacing: 32.5px; color: #62a9f9; }
.fx { display: grid; grid-template-columns: 310px 160px 430px 140px; grid-template-rows: 560px 250px 220px; column-gap: 10px; justify-content: end; padding-right: 20px; }
.eq { grid-column: 1 / 4; }
.out { grid-column: 4; grid-row: 1 / 4; margin-bottom: -30px; }
.low, .hi, .tap { margin-top: 20px; height: 250px; }
.rev, .pre { margin-top: 30px; height: 220px; }
.rev { grid-column: 1 / 3; }
.rev .knobs { gap: 40px; }
.tap .knobs > div { flex: none; width: 120px; }
.bands { display: flex; gap: 20px; align-self: stretch; margin: 14px 13px 0; height: 480px; }
.bands > .panel { flex: 1; }
.stack { display: flex; flex-direction: column; align-items: center; padding-top: 19px; }
.stack .t { margin-bottom: 28px; }
.vu { display: flex; gap: 20px; margin-top: 14px; height: 880px; }
.vu i { width: 40px; border: 6px solid var(--a); border-top-width: 5px; border-radius: 6px; background: #79c0fb; }
.knob.sm { width: 76px; height: 76px; margin-top: 14px; }
.knob.sm::before { inset: 11.5px; }
.knob.sm::after { left: 34.5px; top: 14px; width: 7px; height: 13px; transform-origin: 50% 24px; }
.low .tri, .tap .tri { border-top-width: 13px; }
.low .two { gap: 30px; margin-top: 15px; }
.deep { margin-top: 69px; }
.amount { align-self: flex-start; display: flex; align-items: center; gap: 5px; margin: 19px 0 0 21px; }
.amount i { width: 18px; height: 28px; border-radius: 6px; background: #fff; }
.pre .select { height: 60px; margin-top: 24px; justify-content: flex-start; padding-left: 11px; }
.pre .tri { border-top-width: 18px; }
.acts { display: flex; width: 322px; justify-content: space-between; align-self: flex-start; margin: 23px 0 0 62px; }

.scan { --a: #e849f5; --p: #ed86e8; --k: #fcf0fb; --s: #f3b9f0; --sb: #e2aee2; left: 84px; top: 420px; width: 1740px; height: 838px; background: #ef93e9; }
.scan .name { gap: 57px; left: -30px; }
.scan .logo { height: 139px; flex: none; margin-left: 593px; font: 85px/142px "DejaVu Sans", sans-serif; letter-spacing: 24px; color: #f7d3fb; }
.grid { display: grid; grid-template-columns: 380px 420px 420px 420px; grid-template-rows: repeat(3, 200px); gap: 20px; padding-left: 20px; }
.select.tall { height: 50px; padding-right: 35px; }
.btns { display: flex; gap: 20px; align-self: stretch; margin: 10px 13px 0; }
.btns span { flex: 1; height: 50px; border-radius: 4px; background: var(--s); display: flex; align-items: center; justify-content: center; padding-bottom: 2px; }
.exp { position: absolute; right: 22px; top: 5px; fill: #fbdcfd; font-size: 19.5px; }
.sel2 { grid-row: 2 / 4; }
.sel2 .select { padding-right: 25px; }
.sel2 .select.last { margin-top: 10px; padding-right: 30px; }
.view { align-self: stretch; margin: 10px 13px 0; height: 240px; background: #ef93e9; }
.mods { grid-column: 2 / 4; }
.hu { align-self: stretch; margin: 22px 13px 0; display: flex; flex-direction: column; gap: 20px; }
.hu i { height: 40px; border: 6px solid var(--a); border-radius: 5px; background: #ef93e9; }
.keys { position: relative; grid-column: 4; justify-self: end; width: 147px; height: 198px; display: flex; background: #f3b5eb; box-shadow: inset 0 8px 6px -4px rgba(110,50,110,.45); }
.keys i { width: 32px; border-left: 2px solid #ee93f5; }
.keys span { width: 32px; font: 17px "DejaVu Sans", sans-serif; align-self: flex-end; padding: 0 0 4px 6px; letter-spacing: -1px; }
.keys b { position: absolute; top: 0; width: 22.5px; height: 140px; background: #f09fef; border: 2.5px solid #ec80e8; border-width: 0 2.5px 17px; }
.keys .k1 { left: 18px; } .keys .k2 { left: 54px; } .keys .k3 { left: 111px; }

.pitch { left: 344px; top: 1034px; width: 1326px; height: 639px; background: #040404; }
.pitch > .bar { height: 38px; background: #363636; color: #b4b4b4; border: 0; }
.pitch .lights i { background: #5d5a5a; }
.pitch .lights .red { background: #ed6a5f; }
.pitch .name { gap: 26px; left: -29px; letter-spacing: .4px; }
.pbody { display: flex; gap: 4px; padding-left: 24px; font-family: "Noto Sans", sans-serif; color: #78fb4c; }
.voice { width: 180px; display: flex; flex-direction: column; align-items: center; }
.pbody h3 { height: 88px; line-height: 92px; font-size: 43px; font-weight: 700; white-space: nowrap; text-align: center; }
.voice:not(.outv) h3 { letter-spacing: .8px; word-spacing: 4px; }
.big { width: 180px; height: 80px; border-radius: 6px; background: #3b8125; color: #fff; font-size: 70px; font-weight: 700; line-height: 80px; text-align: center; }
.ratio { width: 176px; height: 80px; overflow: hidden; text-align: center; }
.ratio b { display: block; height: 42px; line-height: 37px; font-size: 25px; white-space: nowrap; letter-spacing: .4px; }
.ratio span { display: block; height: 36px; background: #3b8125; color: #fff; }
.ratio em { font-size: 52px; line-height: 34px; height: 38px; letter-spacing: 2px; }
.dial { position: relative; width: 142px; height: 142px; border-radius: 50%; background: conic-gradient(from 216deg, #9fcc3f 144deg, #000 0 288deg, transparent 0); margin-top: 33px; flex: none; }
.dial::before { content: ""; position: absolute; inset: 20px; border-radius: 50%; background: #dedede; border: 1.5px solid #0a0d04; }
.dial::after { content: ""; position: absolute; left: 65.5px; top: 25px; width: 11px; height: 25px; border-radius: 2px; background: #505050; }
.voice label { height: 28px; line-height: 28px; font-size: 24px; }
label + .dial { margin-top: 14px; }
.outv .dial { margin-top: 217px; }
.presets { width: 360px; margin-left: 8px; }
.combo { height: 38px; border: 2px solid #202020; border-radius: 5px; background: #000; position: relative; }
.combo i { position: absolute; right: 10px; top: 12px; border: 8px solid transparent; border-top: 12px solid #fff; border-bottom: 0; }
.pair { display: flex; gap: 4px; margin-top: 4px; }
.pair span { flex: 1; height: 38px; background: #000; color: #fff; text-align: center; font-size: 24px; line-height: 36px; font-weight: 500; }
```
